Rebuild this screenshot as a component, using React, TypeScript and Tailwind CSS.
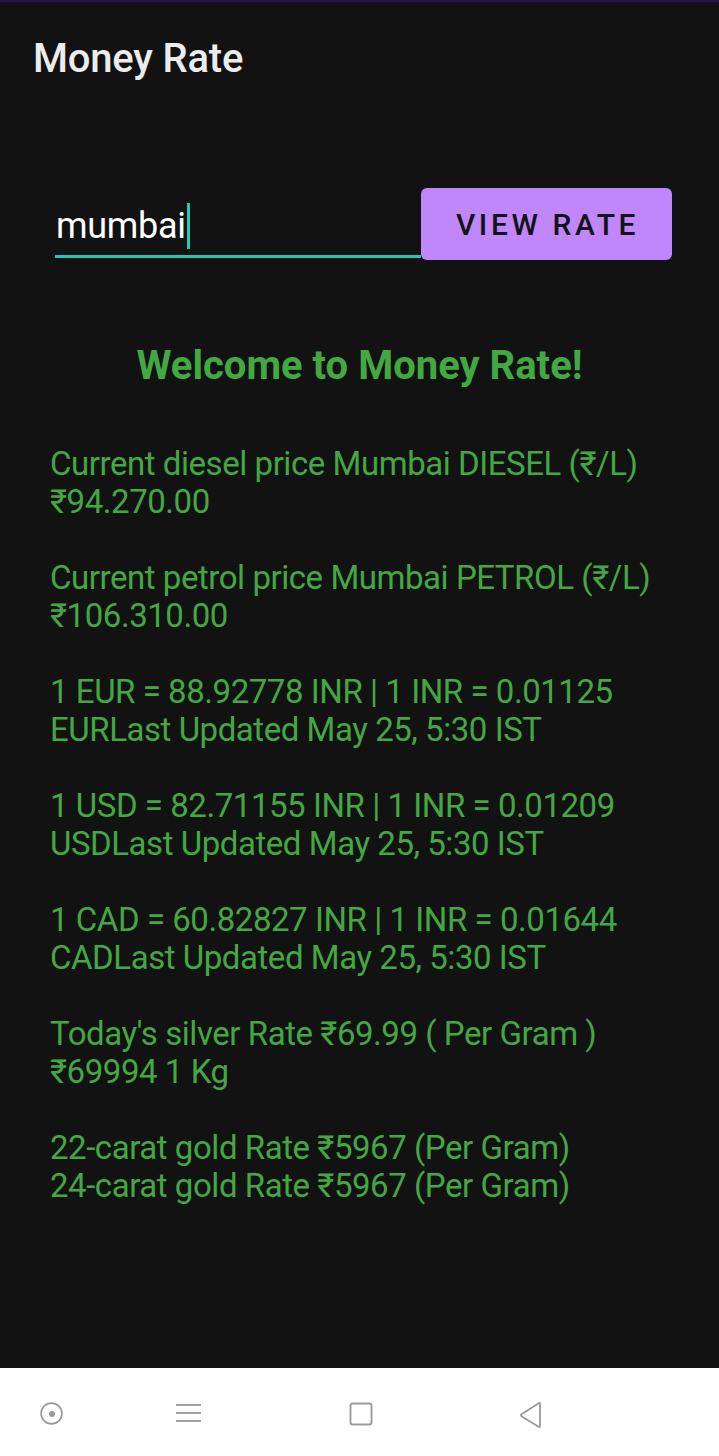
import { Circle, Square } from "lucide-react";

const blocks: string[][] = [
  ["Current diesel price Mumbai DIESEL (₹/L)", "₹94.270.00"],
  ["Current petrol price Mumbai PETROL (₹/L)", "₹106.310.00"],
  ["1 EUR = 88.92778 INR | 1 INR = 0.01125", "EURLast Updated May 25, 5:30 IST"],
  ["1 USD = 82.71155 INR | 1 INR = 0.01209", "USDLast Updated May 25, 5:30 IST"],
  ["1 CAD = 60.82827 INR | 1 INR = 0.01644", "CADLast Updated May 25, 5:30 IST"],
  ["Today's silver Rate ₹69.99 ( Per Gram )", "₹69994 1 Kg"],
  ["22-carat gold Rate ₹5967 (Per Gram)", "24-carat gold Rate ₹5967 (Per Gram)"],
];

export default function App() {
  return (
    <div className="flex h-[1456px] w-[719px] flex-col bg-[#121212] font-['Roboto',sans-serif]">
      <div className="h-[2px] bg-[#25154a]" />

      {/* toolbar */}
      <div className="flex h-[110px] items-start pl-[33px] pt-[34px]">
        <h1 className="text-[40px] font-medium leading-[46px] tracking-[-0.2px] text-[#ececec]">Money Rate</h1>
      </div>

      {/* search row */}
      <div className="ml-[55px] mr-[47px] mt-[76px] flex items-stretch">
        <div className="flex flex-1 flex-col justify-end">
          <div className="flex items-center pb-[6px] pl-[1px]">
            <span className="text-[36px] leading-[46px] tracking-[-0.3px] text-white">mumbai</span>
            <span className="ml-[1px] h-[46px] w-[3px] bg-[#1fc9b6]" />
          </div>
          <div className="mb-[2px] h-[3px] bg-[#1fc9b6]" />
        </div>
        <button className="flex h-[72px] w-[251px] items-center justify-center rounded-[6px] bg-[#bf87fb] pl-[2px] text-[30px] font-medium tracking-[3.6px] text-[#141414]">
          VIEW RATE
        </button>
      </div>

      <h2 className="mt-[83px] text-center text-[40px] font-bold leading-[46px] text-[#43a842]">
        Welcome to Money Rate!
      </h2>

      <div className="mt-[56px] flex flex-col gap-[38px] pl-[50px]">
        {blocks.map((b, i) => (
          <div key={i} className="flex flex-col text-[33px] leading-[38px] tracking-[-0.45px] text-[#43a842]">
            <span>{b[0]}</span>
            <span>{b[1]}</span>
          </div>
        ))}
      </div>

      <div className="flex-1" />

      {/* system nav bar */}
      <div className="relative h-[88px] bg-white">
        <div className="absolute left-[39px] top-[33px] flex h-[25px] w-[25px] items-center justify-center">
          <Circle size={25} strokeWidth={1.6} className="absolute text-[#9a9a9a]" />
          <div className="h-[6px] w-[6px] rounded-full bg-[#9a9a9a]" />
        </div>
        <div className="absolute left-[176px] top-[36px] flex w-[25px] flex-col gap-[6px]">
          <div className="h-[2px] bg-[#a0a0a0]" />
          <div className="h-[2px] bg-[#a0a0a0]" />
          <div className="h-[2px] bg-[#a0a0a0]" />
        </div>
        <div className="absolute left-[347px] top-[32px]">
          <Square size={28} strokeWidth={1.6} className="text-[#9a9a9a]" />
        </div>
        <svg className="absolute left-[516px] top-[32px]" width="30" height="30" viewBox="0 0 30 30" fill="none">
          <path d="M24 3.5 L24 26 Q24 27.5 22.7 26.7 L5.5 16.2 Q4.3 15.2 5.5 14.3 L22.7 3.3 Q24 2.5 24 3.5 Z" stroke="#9a9a9a" strokeWidth="1.8" strokeLinejoin="round" />
        </svg>
      </div>
    </div>
  );
}
